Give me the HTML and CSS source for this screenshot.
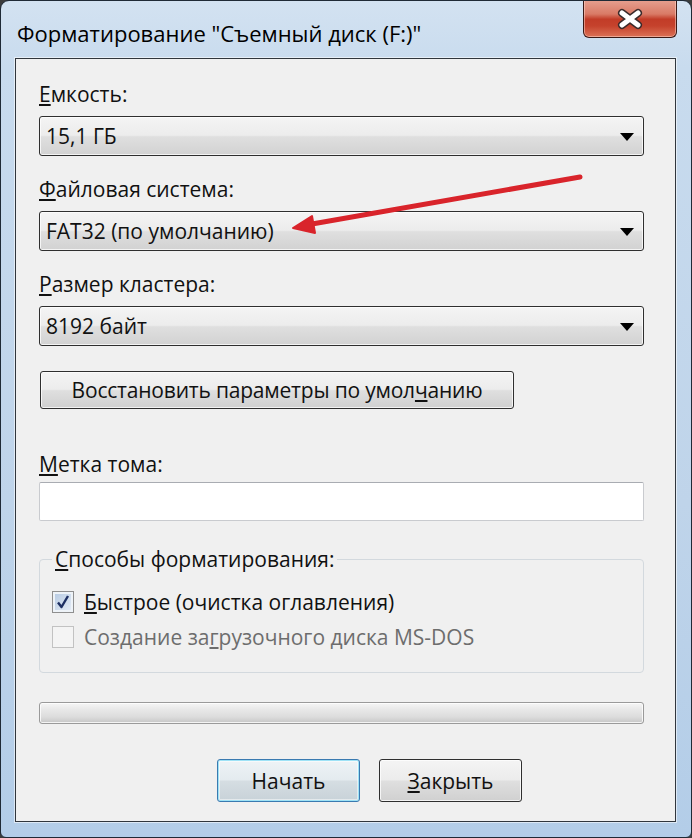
FILE: index.html
```html
<!DOCTYPE html>
<html lang="ru">
<head>
<meta charset="utf-8">
<title>Форматирование</title>
<link rel="stylesheet" href="styles.css">
</head>
<body>
<div class="window">
  <div class="titlebar">
    <div class="title">Форматирование "Съемный диск (F:)"</div>
    <div class="close-btn">
      <svg width="30" height="22" viewBox="0 0 30 22">
        <path d="M7 5 L23 17 M23 5 L7 17" stroke="#3a2a2a" stroke-width="8" stroke-linecap="round"/>
        <path d="M7 5 L23 17 M23 5 L7 17" stroke="#ffffff" stroke-width="5" stroke-linecap="round"/>
      </svg>
    </div>
  </div>
  <div class="client">
    <div class="label"><u>Е</u>мкость:</div>
    <div class="combo"><span class="combo-text">15,1 ГБ</span><span class="arrow"></span></div>
    <div class="label"><u>Ф</u>айловая система:</div>
    <div class="combo"><span class="combo-text">FAT32 (по умолчанию)</span><span class="arrow"></span></div>
    <div class="label"><u>Р</u>азмер кластера:</div>
    <div class="combo"><span class="combo-text">8192 байт</span><span class="arrow"></span></div>
    <div class="btn restore">Восстановить параметры по умол<u>ч</u>анию</div>
    <div class="label label-volume"><u>М</u>етка тома:</div>
    <div class="textbox"></div>
    <fieldset class="group">
      <legend><u>С</u>пособы форматирования:</legend>
      <div class="check-row">
        <span class="checkbox checked">
          <svg width="18" height="18" viewBox="0 0 18 18"><path d="M4 9.5 L7.5 14 L14 3" fill="none" stroke="#1d2f63" stroke-width="2.4" stroke-linejoin="round"/></svg>
        </span>
        <span><u>Б</u>ыстрое (очистка оглавления)</span>
      </div>
      <div class="check-row disabled">
        <span class="checkbox"></span>
        <span>Создание за<u>г</u>рузочного диска MS-DOS</span>
      </div>
    </fieldset>
    <div class="progress"></div>
    <div class="buttons">
      <div class="btn action default">Начать</div>
      <div class="btn action"><u>З</u>акрыть</div>
    </div>
  </div>
  <svg class="annotation" width="692" height="838" viewBox="0 0 692 838">
    <line x1="580" y1="177" x2="312" y2="224" stroke="#d9242b" stroke-width="5" stroke-linecap="round"/>
    <polygon points="293,228 312,216 315,233" fill="#d9242b" stroke="#d9242b" stroke-width="2" stroke-linejoin="round"/>
  </svg>
</div>
</body>
</html>
```
FILE: styles.css
```css
* { box-sizing: border-box; }
html, body { margin: 0; padding: 0; }
body {
  background: #3c3c3c;
  font-family: "Open Sans", "Noto Sans", sans-serif;
  color: #111;
}
.window {
  position: relative;
  width: 692px;
  height: 838px;
  border: 1px solid #1f2a36;
  border-radius: 9px 9px 6px 6px;
  background: linear-gradient(180deg, #d3e2f1 0%, #c8dbee 8%, #bfd4ea 60%, #b3cde8 100%);
  display: flex;
  flex-direction: column;
  padding: 0 15px 15px 14px;
  overflow: hidden;
}
.titlebar {
  height: 57px;
  display: flex;
  justify-content: space-between;
  align-items: flex-start;
  flex-shrink: 0;
}
.title {
  font-size: 22px;
  line-height: 28px;
  margin-top: 18px;
  margin-left: 2px;
  color: #000;
  white-space: nowrap;
}
.close-btn {
  width: 94px;
  height: 38px;
  margin-top: -1px;
  margin-right: -1px;
  border: 1px solid #3b1a16;
  border-top: none;
  border-radius: 0 0 6px 6px;
  background: linear-gradient(180deg, #e6a090 0%, #d97a66 38%, #c23c28 52%, #c5422c 70%, #dc7257 100%);
  box-shadow: inset 0 0 0 1px rgba(255, 220, 210, 0.5);
  display: flex;
  align-items: center;
  justify-content: center;
}
.client {
  flex: 1;
  background: #f0f0f0;
  border: 1px solid #30363d;
  box-shadow: 0 0 0 1px rgba(255, 255, 255, 0.55);
  display: flex;
  flex-direction: column;
  align-items: flex-start;
  padding: 0 0 0 23px;
}
.label {
  font-size: 21px;
  line-height: 28px;
  height: 28px;
  margin-top: 19px;
  white-space: nowrap;
}
.label:first-child { margin-top: 21px; }
.label-volume { margin-top: 41px; }
.combo {
  width: 605px;
  height: 40px;
  margin-top: 8px;
  border: 1px solid #2f2f2f;
  border-radius: 3px;
  background: linear-gradient(180deg, #f4f4f4 0%, #ececec 48%, #dfdfdf 52%, #d2d2d2 100%);
  box-shadow: inset 0 0 0 1px rgba(255, 255, 255, 0.75);
  display: flex;
  align-items: center;
  justify-content: space-between;
  padding: 0 9px 0 6px;
  font-size: 21px;
}
.arrow {
  width: 0;
  height: 0;
  border-left: 7px solid transparent;
  border-right: 7px solid transparent;
  border-top: 8px solid #000;
  margin-top: 2px;
}
.btn {
  border: 1px solid #2f2f2f;
  border-radius: 3px;
  background: linear-gradient(180deg, #f4f4f4 0%, #ececec 48%, #dfdfdf 52%, #d0d0d0 100%);
  box-shadow: inset 0 0 0 1px rgba(255, 255, 255, 0.75);
  display: flex;
  align-items: center;
  justify-content: center;
  font-size: 21px;
  white-space: nowrap;
}
.restore {
  width: 474px;
  height: 38px;
  margin-top: 25px;
  margin-left: 1px;
  letter-spacing: -0.2px;
}
.textbox {
  width: 605px;
  height: 39px;
  margin-top: 4px;
  background: #fff;
  border: 1px solid #c9cbcf;
  border-top-color: #a9acb2;
  border-radius: 2px;
}
.group {
  width: 605px;
  margin: 24px 0 0 0;
  padding: 11px 12px 18px 12px;
  border: 1px solid #d3d9de;
  border-radius: 4px;
  min-width: 0;
}
.group legend {
  font-size: 21px;
  line-height: 28px;
  padding: 0 3px;
  margin-left: 0;
}
.check-row {
  height: 35px;
  display: flex;
  align-items: center;
  font-size: 21px;
  white-space: nowrap;
}
.check-row.disabled { color: #6d6d6d; }
.checkbox {
  width: 22px;
  height: 22px;
  border: 1px solid #8f8f8f;
  background: linear-gradient(135deg, #dcdcdc 0%, #f6f6f6 100%);
  box-shadow: inset 0 0 0 2px #f4f4f4;
  margin-right: 10px;
  display: flex;
  align-items: center;
  justify-content: center;
  flex-shrink: 0;
}
.checkbox.checked {
  background: linear-gradient(135deg, #b4c9e2 0%, #e8eef6 100%);
  box-shadow: inset 0 0 0 2px #eef3f8;
}
.check-row.disabled .checkbox {
  border-color: #c2c2c2;
  background: #f4f4f4;
  box-shadow: none;
}
.progress {
  width: 605px;
  height: 22px;
  margin-top: 29px;
  border: 1px solid #9a9a9a;
  border-radius: 3px;
  background: linear-gradient(180deg, #f6f6f6 0%, #e9e9e9 30%, #dcdcdc 70%, #c6c6c6 100%);
  box-shadow: inset 0 0 0 1px rgba(255, 255, 255, 0.8);
}
.buttons {
  display: flex;
  gap: 19px;
  margin-top: 35px;
  margin-left: 178px;
}
.action {
  width: 143px;
  height: 43px;
}
.action.default {
  border-color: #3a7ab0;
  box-shadow: inset 0 0 0 1px #9ee2f6, inset 0 0 0 2px rgba(255, 255, 255, 0.5);
  background: linear-gradient(180deg, #eef3f6 0%, #e4ebef 48%, #d5dde2 52%, #c8d2d8 100%);
}
.annotation {
  position: absolute;
  left: -1px;
  top: -1px;
  pointer-events: none;
}
```
